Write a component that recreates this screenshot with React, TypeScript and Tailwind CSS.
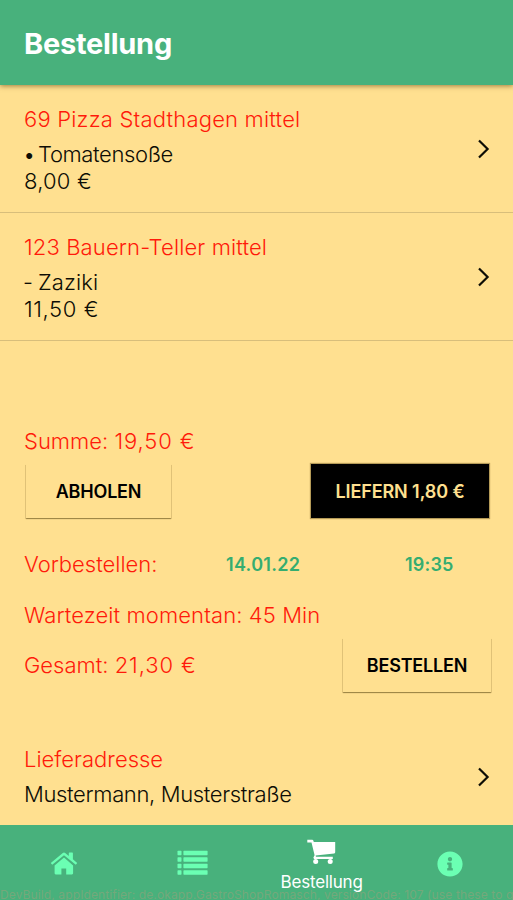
import React, { useState } from 'react';
import { FaInfoCircle } from 'react-icons/fa';

interface Position {
    title: string;
    titleClass: string;
    mark: string;
    extra: string;
    extraClass: string;
    price: string;
    priceClass: string;
}

const positions: Position[] = [
    { title: '69 Pizza Stadthagen mittel', titleClass: 'tracking-[0.19px]', mark: '•', extra: 'Tomatensoße', extraClass: 'tracking-[-0.38px]', price: '8,00 €', priceClass: 'tracking-[0.2px]' },
    { title: '123 Bauern-Teller mittel', titleClass: 'tracking-[0.13px]', mark: '-', extra: 'Zaziki', extraClass: 'tracking-[0.1px]', price: '11,50 €', priceClass: 'tracking-[0.6px]' },
];

function Chevron() {
    return (
        <svg className="w-3 h-5 shrink-0" viewBox="0 0 12 20" fill="none" stroke="#0d0d05" strokeWidth="2.2">
            <path d="M1 1.5 L9.6 10 L1 18.5" />
        </svg>
    );
}

function HomeIcon() {
    return (
        <svg className="w-7 h-6" viewBox="0 0 28 24" fill="currentColor">
            <path d="M14 5.6 L4.6 13.4 V21.3 Q4.6 22.4 5.7 22.4 H11.4 V16.4 H16.2 V22.4 H22 Q23.1 22.4 23.1 21.3 V13.4 Z" />
            <path d="M12.8 1 Q14 0.1 15.2 1 L18.8 4 V1.2 Q18.8 0.6 19.4 0.6 H22.3 Q22.9 0.6 22.9 1.2 V7.3 L27.2 11 L25.8 12.7 L14 3.2 L2.2 12.7 L0.8 11 Z" />
        </svg>
    );
}

function ListIcon() {
    return (
        <svg className="w-[31px] h-[26px]" viewBox="0 0 31 26" fill="currentColor">
            {[0.8, 7.3, 13.8, 20.3].map(y => (
                <g key={y}>
                    <rect x="0.5" y={y} width="4" height="4.4" rx="0.6" />
                    <rect x="6.4" y={y} width="24.2" height="4.4" rx="0.6" />
                </g>
            ))}
        </svg>
    );
}

function CartIcon() {
    return (
        <svg className="w-[29px] h-[26px]" viewBox="0 0 29 26" fill="currentColor">
            <path d="M0.3 0.8 H5.2 Q6.1 0.8 6.4 1.8 L6.8 3.1 H28.2 V13.2 Q28.2 14.2 27.2 14.4 L8.6 16.6 L9 17.8 H25.8 V20 H7 L6.4 18.4 L7.6 16.2 L4.5 3.4 H0.3 Z" />
            <circle cx="8.7" cy="22.4" r="2.5" />
            <circle cx="23.2" cy="22.4" r="2.5" />
        </svg>
    );
}

export default function App() {
    const [delivery, setDelivery] = useState(true);

    const active = 'bg-black text-[#ffe090] shadow-[0_0_1px_1px_rgba(90,70,20,0.45)]';
    const inactive = 'text-black shadow-[0_1px_1px_rgba(90,70,20,0.45),1px_1px_0_rgba(90,70,20,0.12),-1px_1px_0_rgba(90,70,20,0.12)]';

    return (
        <div className="relative flex h-[900px] w-[513px] flex-col overflow-hidden bg-[#ffe090] font-['Inter',sans-serif] text-[22px] font-light leading-[27px] text-[#0d0d05]">
            <header className="z-10 flex h-[85px] shrink-0 items-center bg-[#48b17c] pl-6 pt-px shadow-[0_1px_5px_rgba(90,60,10,0.6)]">
                <h1 className="text-[29px] font-bold tracking-[-0.25px] text-white">Bestellung</h1>
            </header>

            <main className="flex flex-1 flex-col">
                {positions.map(position => (
                    <div key={position.title} className="flex h-32 items-center justify-between border-b border-[#d8be7b] pl-6 pr-[23px]">
                        <div className="pt-1">
                            <p className={`mb-2 text-[#ff1a0a] ${position.titleClass}`}>{position.title}</p>
                            <p className={`flex ${position.extraClass}`}>
                                <span className="w-[15px] -ml-px">{position.mark}</span>
                                <span>{position.extra}</span>
                            </p>
                            <p className={position.priceClass}>{position.price}</p>
                        </div>
                        <Chevron />
                    </div>
                ))}

                <section className="flex flex-col px-6 pt-[87px] text-[#ff1a0a]">
                    <p>Summe: <span className="tracking-[0.9px]">19,50 €</span></p>
                    <div className="mt-[9px] flex justify-between pl-[2px] text-[18px] font-semibold">
                        <button className={`h-[54px] w-[145px] tracking-[-0.2px] ${delivery ? inactive : active}`} onClick={() => setDelivery(false)} type="button">ABHOLEN</button>
                        <button className={`h-[54px] w-[178px] tracking-[-0.1px] ${delivery ? active : inactive}`} onClick={() => setDelivery(true)} type="button">LIEFERN 1,80 €</button>
                    </div>
                    <div className="mt-[33px] flex items-center">
                        <p className="w-[202px]">Vorbestellen:</p>
                        <button className="w-[179px] text-left text-[18px] font-semibold tracking-[0.3px] text-[#35ad70]" type="button">14.01.22</button>
                        <button className="text-[18px] font-semibold tracking-[0.2px] text-[#35ad70]" type="button">19:35</button>
                    </div>
                    <p className="mt-6 tracking-[0.1px]">Wartezeit momentan: 45 Min</p>
                    <div className="mt-[9px] flex items-center justify-between">
                        <p>Gesamt: <span className="tracking-[0.9px]">21,30 €</span></p>
                        <button className="-mr-[2px] h-[54px] w-[148px] text-[18px] font-semibold tracking-[-0.2px] text-black shadow-[0_1px_1px_rgba(90,70,20,0.45),1px_1px_0_rgba(90,70,20,0.12),-1px_1px_0_rgba(90,70,20,0.12)]" type="button">BESTELLEN</button>
                    </div>
                </section>

                <section className="mt-[54px] flex items-center justify-between pl-6 pr-[23px]">
                    <div>
                        <p className="mb-2 text-[#ff1a0a]">Lieferadresse</p>
                        <p className="tracking-[-0.35px]">Mustermann, Musterstraße</p>
                    </div>
                    <Chevron />
                </section>
            </main>

            <nav className="grid h-[75px] shrink-0 grid-cols-4 bg-[#48b17c] text-[#6bffb3]">
                <a className="flex justify-center pt-[27px]"><HomeIcon /></a>
                <a className="flex justify-center pt-[25px]"><ListIcon /></a>
                <a className="flex flex-col items-center pt-[14px] pl-[2px] text-white">
                    <CartIcon />
                    <span className="mt-1 text-[17px] font-normal tracking-[-0.2px]">Bestellung</span>
                </a>
                <a className="flex justify-center pt-[26px] pl-[3px]"><FaInfoCircle className="size-[26px]" /></a>
            </nav>
            <p className="absolute bottom-[-2px] left-0 whitespace-nowrap text-[12px] font-normal leading-[14px] tracking-[0.12px] text-[#74a87b]">
                DevBuild, appIdentifier: de.okapp.GastroShopRomasch, versionCode: 107 (use these to g
            </p>
        </div>
    );
}
